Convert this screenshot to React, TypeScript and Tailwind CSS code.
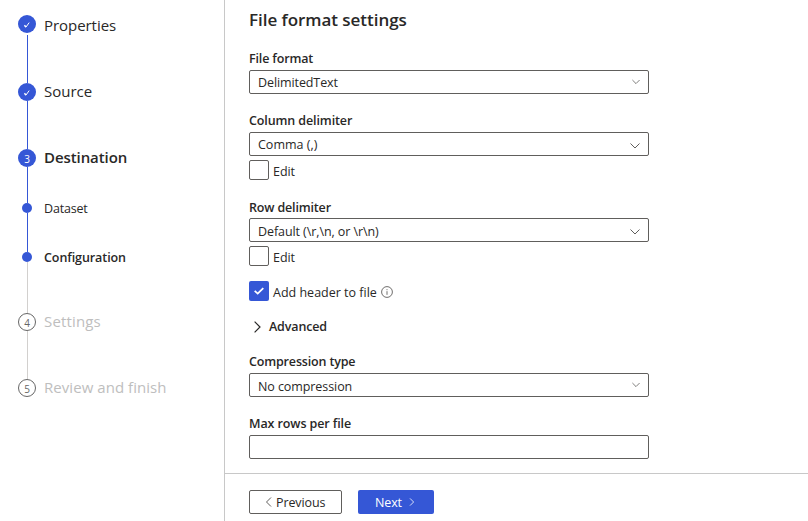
import type { ReactNode } from "react";

function Chevron({ className, d = "M0.5 2.5 5 7 9.5 2.5" }: { className: string; d?: string }) {
  return (
    <svg viewBox="0 0 10 10" className={className} fill="none" stroke="currentColor" strokeWidth="1">
      <path d={d} />
    </svg>
  );
}

function Step({ node, label, className }: { node: ReactNode; label: string; className: string }) {
  return (
    <div className="flex h-[18px] items-center gap-2">
      <div className="flex w-[18px] shrink-0 justify-center">{node}</div>
      <span className={`whitespace-nowrap ${className}`}>{label}</span>
    </div>
  );
}

const filled = "flex size-[18px] items-center justify-center rounded-full bg-[#3557d6] pt-px text-[10px] leading-none text-white";
const hollow = "flex size-[18px] items-center justify-center rounded-full border border-[#666] pt-px text-[10px] leading-none text-[#666]";
const dot = "size-[10px] rounded-full bg-[#3557d6]";

function Tick() {
  return (
    <svg viewBox="0 0 8 8" className="size-2" fill="none" stroke="currentColor">
      <path d="M1.4 4.2 2.9 6" strokeWidth="1.4" />
      <path d="M2.8 6.3 6.2 1.6" strokeWidth="1" />
    </svg>
  );
}

type FieldProps = { label: string; labelClass: string; value?: string; valueClass?: string; chevron?: string };

function Field({ label, labelClass, value, valueClass, chevron }: FieldProps) {
  return (
    <div className="w-[400px]">
      <div className={`h-5 font-semibold leading-5 ${labelClass}`}>{label}</div>
      <div className="mt-[2px] flex h-6 items-center justify-between rounded-[2px] border border-[#605e5c] pl-2">
        <span className={valueClass}>{value}</span>
        {chevron && <Chevron className={`text-[#605e5c] ${chevron}`} />}
      </div>
    </div>
  );
}

function Box({ checked }: { checked?: boolean }) {
  return checked ? (
    <span className="flex size-5 items-center justify-center rounded-[2px] bg-[#3557d6] text-white">
      <svg viewBox="0 0 12 12" className="size-3" fill="none" stroke="currentColor" strokeWidth="1.8">
        <path d="M1.7 5.8 4.7 8.6 10.3 3.1" />
      </svg>
    </span>
  ) : (
    <span className="size-5 rounded-[2px] border border-[#605e5c]" />
  );
}

export default function App() {
  return (
    <div className="flex h-[521px] w-[808px] overflow-hidden bg-white font-['Open_Sans',sans-serif] text-[12.5px] leading-5 text-[#292827]">
      <nav className="flex w-[225px] shrink-0 flex-col border-r border-[#c8c8c8] pl-[18px] pt-[15px] text-[15px]">
        <Step node={<span className={filled}><Tick /></span>} label="Properties" className="pt-[2px] tracking-[-0.05px]" />
        <div className="ml-[9px] mt-[2px] h-12 w-px bg-[#3557d6]" />
        <Step node={<span className={filled}><Tick /></span>} label="Source" className="pb-[2px]" />
        <div className="ml-[9px] h-12 w-px bg-[#3557d6]" />
        <Step node={<span className={filled}>3</span>} label="Destination" className="pb-[2px] font-semibold tracking-[-0.08px]" />
        <div className="ml-[9px] h-9 w-px bg-[#3557d6]" />
        <div className="flex h-[10px] items-center gap-3 pl-1 text-[12.5px]">
          <span className={dot} />
          <span className="pt-[2px] tracking-[-0.17px]">Dataset</span>
        </div>
        <div className="ml-[9px] h-[39px] w-px bg-[#3557d6]" />
        <div className="flex h-[10px] items-center gap-3 pl-1 text-[12.5px] font-semibold">
          <span className={dot} />
          <span className="pt-[2px] tracking-[-0.08px]">Configuration</span>
        </div>
        <div className="ml-[9px] h-[51px] w-px bg-[#d2d0ce]" />
        <Step node={<span className={hollow}>4</span>} label="Settings" className="pb-[2px] tracking-[0.15px] text-[#bebebe]" />
        <div className="ml-[9px] h-12 w-px bg-[#d2d0ce]" />
        <Step node={<span className={hollow}>5</span>} label="Review and finish" className="pb-[2px] tracking-[0.05px] text-[#bebebe]" />
      </nav>

      <main className="flex min-w-0 flex-1 flex-col">
        <section className="h-[473px] pl-6 pt-2">
          <h1 className="h-6 text-[17px] font-semibold leading-6 tracking-[-0.04px]">File format settings</h1>
          <div className="mt-4">
            <Field label="File format" labelClass="pt-px tracking-[-0.15px]" value="DelimitedText" valueClass="pt-[2px] tracking-[-0.1px]" chevron="mr-2 size-2" />
          </div>
          <div className="mt-4">
            <Field label="Column delimiter" labelClass="pt-px tracking-[-0.11px]" value="Comma (,)" valueClass="pt-[2px]" chevron="mr-2 mt-[4px] size-[10px]" />
          </div>
          <div className="mt-1 flex h-5 items-center gap-1">
            <Box />
            <span className="pt-[3px] tracking-[-0.05px]">Edit</span>
          </div>
          <div className="mt-4">
            <Field label="Row delimiter" labelClass="pt-[2px] tracking-[-0.16px]" value="Default (\r,\n, or \r\n)" valueClass="pt-[3px] tracking-[-0.08px]" chevron="mr-2 mt-[4px] size-[10px]" />
          </div>
          <div className="mt-1 flex h-5 items-center gap-1">
            <Box />
            <span className="pt-[3px] tracking-[-0.05px]">Edit</span>
          </div>
          <div className="mt-[15px] flex h-5 items-center gap-1">
            <Box checked />
            <span className="pt-[3px]">Add header to file</span>
            <svg viewBox="0 0 12 12" className="mt-px size-3" fill="none" stroke="#605e5c" strokeWidth="0.9">
              <circle cx="6" cy="6" r="5.4" />
              <path d="M6 5.2v3.6M6 3.2v1" />
            </svg>
          </div>
          <div className="mt-[15px] flex h-5 items-center gap-1 pl-[2px]">
            <Chevron className="mr-[2px] mt-px size-3" d="M3 0.5 7.5 5 3 9.5" />
            <span className="pt-px font-semibold tracking-[-0.14px]">Advanced</span>
          </div>
          <div className="mt-[15px]">
            <Field label="Compression type" labelClass="pt-px tracking-[-0.16px]" value="No compression" valueClass="pt-[3px] tracking-[-0.08px]" chevron="mr-2 size-2" />
          </div>
          <div className="mt-4">
            <Field label="Max rows per file" labelClass="pt-px tracking-[-0.1px]" />
          </div>
        </section>
        <footer className="flex flex-1 gap-4 border-t border-[#c8c8c8] pl-6 pt-4">
          <button className="flex h-6 w-[93px] items-center rounded-[2px] border border-[#605e5c] pl-[14px]">
            <Chevron className="mr-[2px] size-[10px] text-[#605e5c]" d="M7 0.5 2.5 5 7 9.5" />
            <span className="pt-[2px] tracking-[-0.1px]">Previous</span>
          </button>
          <button className="flex h-6 w-[76px] items-center rounded-[2px] bg-[#3557d6] pl-[17px] text-white">
            <span className="pt-[2px] tracking-[-0.15px]">Next</span>
            <Chevron className="ml-[6px] size-2" d="M2.5 0.5 7 5 2.5 9.5" />
          </button>
        </footer>
      </main>
    </div>
  );
}
